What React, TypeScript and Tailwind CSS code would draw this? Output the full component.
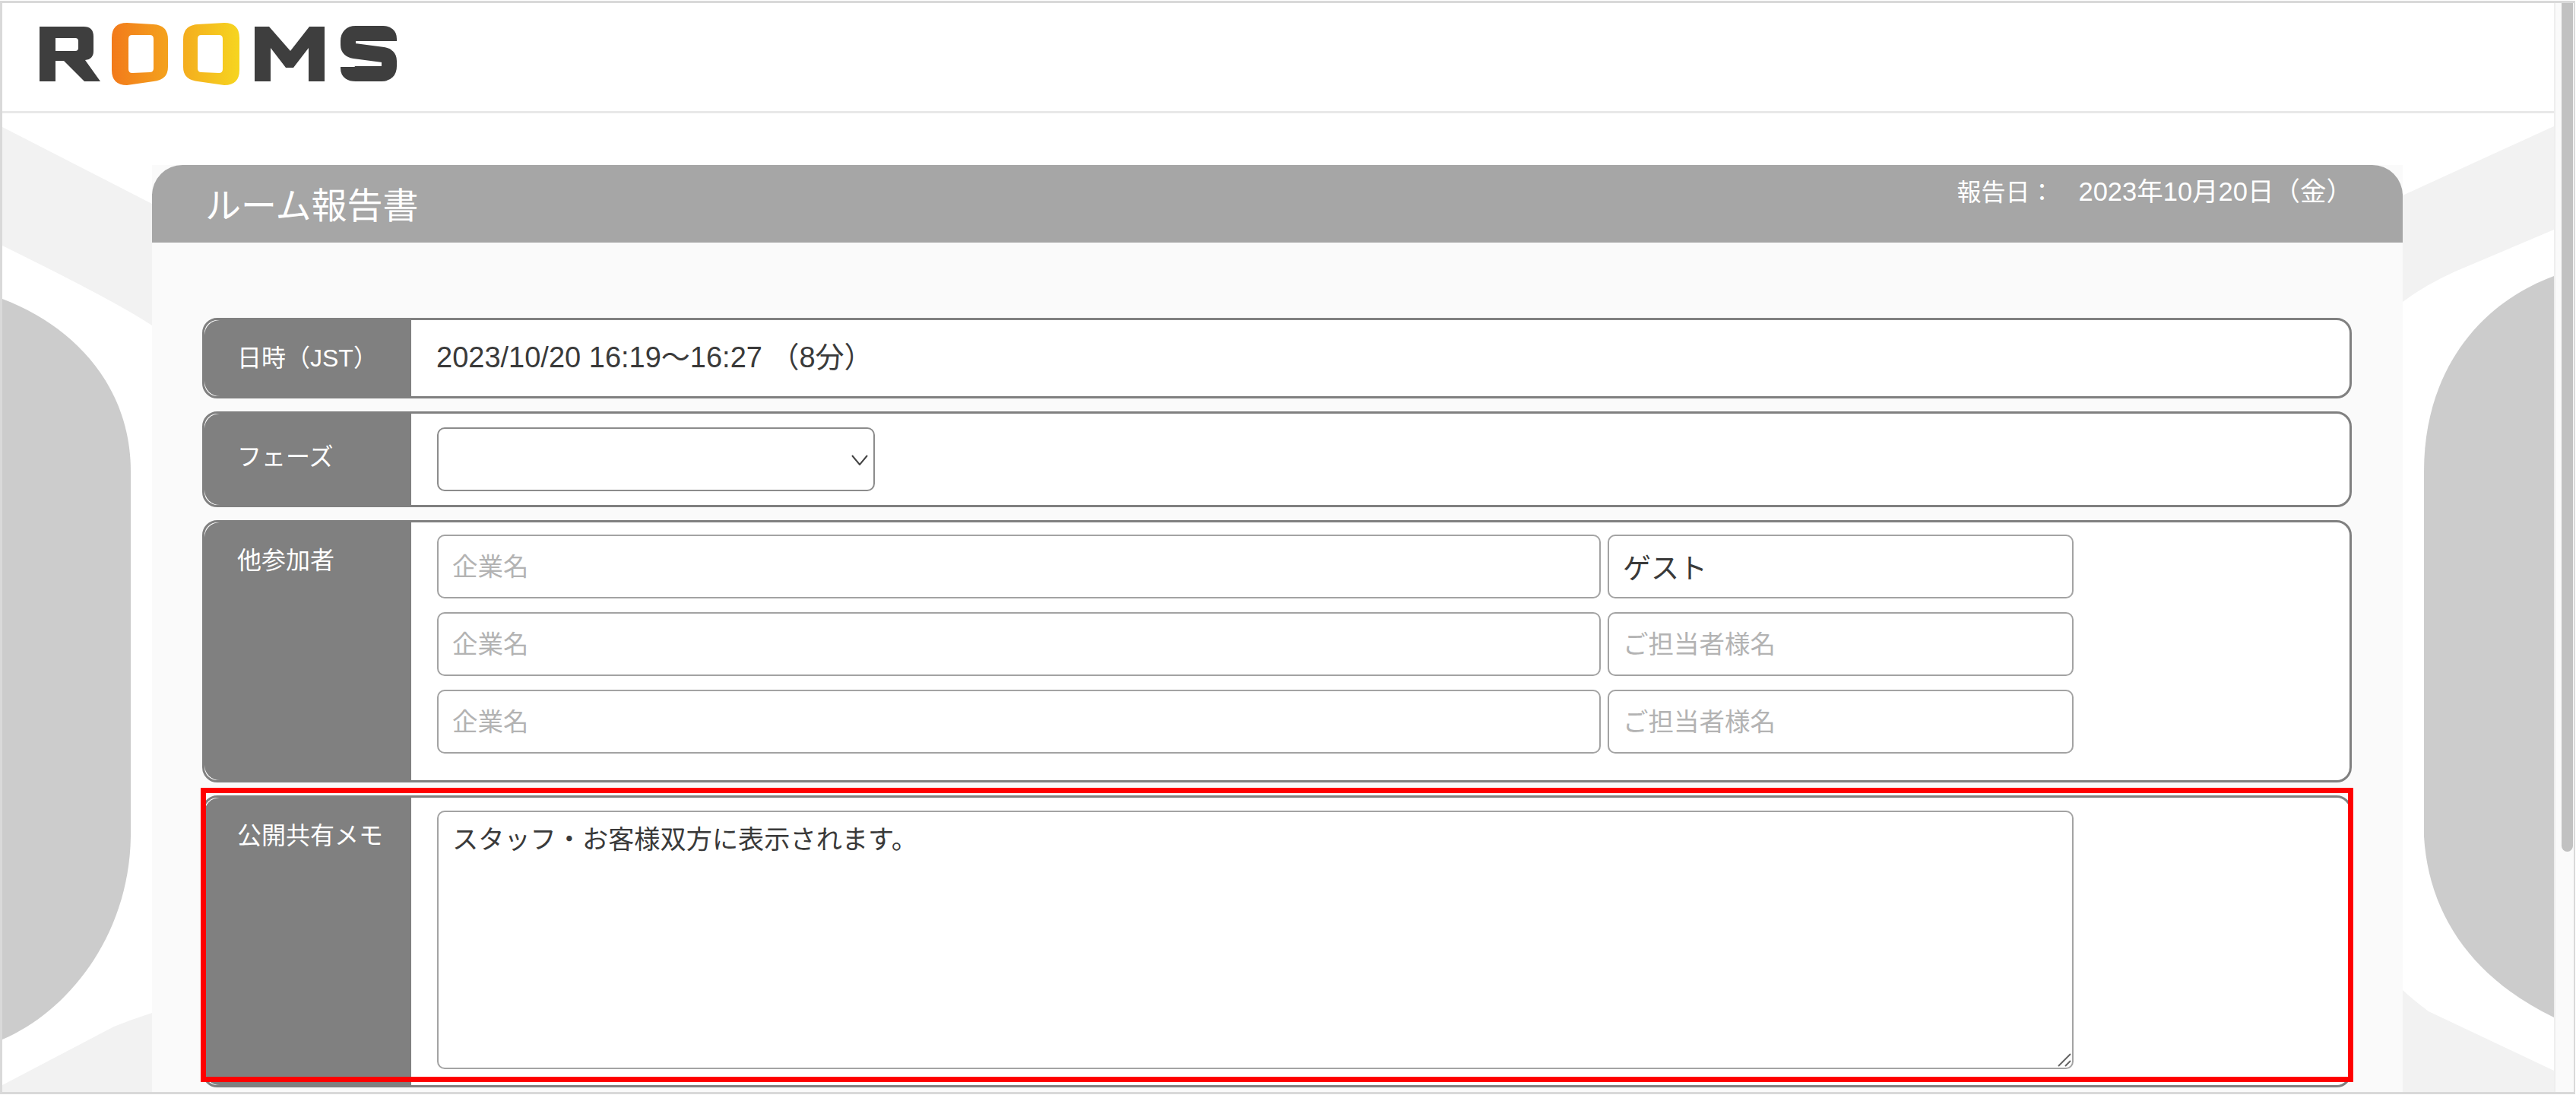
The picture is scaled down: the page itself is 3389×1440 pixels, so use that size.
import React from "react";

function Logo() {
  return (
    <svg width="470" height="82" viewBox="0 0 470 82" className="block">
      <defs>
        <linearGradient id="roomsGrad" gradientUnits="userSpaceOnUse" x1="95" y1="0" x2="263" y2="0">
          <stop offset="0" stopColor="#f27a1b" />
          <stop offset="1" stopColor="#f6d520" />
        </linearGradient>
      </defs>
      <path fill="#3e3e3e" fillRule="evenodd" d="M0 5H58Q71 5 71 18V37Q71 48 60 49L80 77H59L32 50H21V77H0ZM21 20V37H47Q51 37 51 33V24Q51 20 47 20Z" />
      <path fill="url(#roomsGrad)" fillRule="evenodd" d="M115 0L150 2Q169 3 169 22V58Q169 75 150 77L115 82Q95 82 95 62V20Q95 0 115 0ZM122 16Q117 16 117 21V61Q117 66 122 66L145 65Q150 65 150 60V21Q150 16 145 16Z" />
      <path fill="url(#roomsGrad)" fillRule="evenodd" d="M243 0L208 2Q189 3 189 22V58Q189 75 208 77L243 82Q263 82 263 62V20Q263 0 243 0ZM236 16Q241 16 241 21V61Q241 66 236 66L213 65Q208 65 208 60V21Q208 16 213 16Z" />
      <path fill="#3e3e3e" d="M283 5H302L330 37L355 5H375V77H354V33L334 59H324L304 33V77H283Z" />
      <path fill="none" stroke="#3e3e3e" strokeWidth="20" d="M460 24V21Q460 14 452 14H416Q406 14 406 24V29Q406 36 414 37L452 42Q460 43 460 50V57Q460 67 450 67H416Q406 67 406 60V58" />
    </svg>
  );
}

function Backdrop() {
  return (
    <svg className="absolute left-0 top-0" width="3357" height="1290" viewBox="3 149 3357 1290">
      <path fill="#f2f2f2" d="M3 167L200 268V428Q150 395 3 323Z" />
      <path fill="#f2f2f2" d="M3360 166L3161 257V397Q3190 375 3230 357L3360 302Z" />
      <path fill="#f2f2f2" d="M3 1427L150 1350Q175 1340 200 1332V1439H3Z" />
      <path fill="#f2f2f2" d="M3161 1302Q3175 1315 3195 1330L3360 1408V1439H3161Z" />
      <path fill="#cccccc" d="M3 393C100 430 172 510 172 620V1100C170 1230 90 1330 3 1367Z" />
      <path fill="#cccccc" d="M3360 363C3260 400 3189 490 3189 620V1100C3195 1200 3250 1285 3360 1338Z" />
    </svg>
  );
}

const inputClass =
  "h-[84px] w-full rounded-[10px] border-2 border-[#a3a3a3] bg-white px-[18px] text-[37px] text-[#3a3a3a] outline-none placeholder:text-[33.5px] placeholder:text-[#b3b3b3]";

export default function App() {
  return (
    <div className="relative h-[1440px] w-[3389px] overflow-hidden bg-white py-px pr-px font-['Liberation_Sans','Noto_Sans_CJK_JP',sans-serif]">
      <div className="flex h-full border-[3px] border-[#d9d9d9] border-r-[2px]">
        <div className="flex min-w-0 flex-1 flex-col overflow-hidden bg-white">
          <header className="h-[145px] shrink-0 border-b-[3px] border-[#e8e8e8] pl-[49px] pt-[26px]">
            <Logo />
          </header>
          <main className="relative min-h-0 flex-1 pl-[197px] pr-[199px] pt-[68px]">
            <Backdrop />
            <div className="relative h-full bg-[#fafafa]">
              <div className="flex h-[102px] items-start justify-between rounded-t-[40px] bg-[#a6a6a6] pl-[70px] pr-[66px] text-white">
                <h1 className="mt-[20px] text-[47px] font-normal leading-[68px]">ルーム報告書</h1>
                <div className="mt-[12px] flex items-baseline gap-[32px] text-[32px] leading-[46px]">
                  <span>報告日：</span>
                  <span className="text-[34.5px]">2023年10月20日（金）</span>
                </div>
              </div>
              <div className="flex flex-col gap-[17px] pl-[66px] pr-[67px] pt-[99px]">
                <section className="flex h-[106px] overflow-hidden rounded-[20px] border-[3px] border-[#808080] bg-white">
                  <div className="flex w-[272px] shrink-0 items-center rounded-l-[20px] bg-[#808080] pl-[43px] text-[32px] text-white">日時（JST）</div>
                  <div className="flex flex-1 items-center pb-[2px] pl-[33px] text-[38px] text-[#3a3a3a]">2023/10/20 16:19〜16:27 （8分）</div>
                </section>
                <section className="flex h-[126px] overflow-hidden rounded-[20px] border-[3px] border-[#808080] bg-white">
                  <div className="flex w-[272px] shrink-0 items-center rounded-l-[20px] bg-[#808080] pb-[6px] pl-[43px] text-[32px] text-white">フェーズ</div>
                  <div className="flex flex-1 items-center pl-[34px]">
                    <div className="relative h-[84px] w-[576px]">
                      <select className="h-full w-full appearance-none rounded-[10px] border-2 border-[#8c8c8c] bg-white" aria-label="フェーズ" />
                      <svg className="pointer-events-none absolute left-[545px] top-[36px]" width="22" height="14" viewBox="0 0 22 14">
                        <path d="M1 1L11 13L21 1" fill="none" stroke="#444444" strokeWidth="2" />
                      </svg>
                    </div>
                  </div>
                </section>
                <section className="flex h-[345px] overflow-hidden rounded-[20px] border-[3px] border-[#808080] bg-white">
                  <div className="w-[272px] shrink-0 rounded-l-[20px] bg-[#808080] pl-[43px] pt-[28px] text-[32px] leading-[44px] text-white">他参加者</div>
                  <div className="grid flex-1 grid-cols-[1531px_613px] content-start gap-x-[9px] gap-y-[18px] pl-[34px] pt-[16px]">
                    <input className={inputClass} placeholder="企業名" />
                    <input className={inputClass} defaultValue="ゲスト" />
                    <input className={inputClass} placeholder="企業名" />
                    <input className={inputClass} placeholder="ご担当者様名" />
                    <input className={inputClass} placeholder="企業名" />
                    <input className={inputClass} placeholder="ご担当者様名" />
                  </div>
                </section>
                <section className="flex h-[384px] overflow-hidden rounded-[20px] border-[3px] border-[#808080] bg-white">
                  <div className="w-[272px] shrink-0 rounded-l-[20px] bg-[#808080] pl-[43px] pt-[28px] text-[32px] leading-[44px] text-white">公開共有メモ</div>
                  <div className="flex-1 pl-[34px] pt-[17px]">
                    <div className="relative h-[340px] w-[2153px]">
                      <textarea
                        className="block h-full w-full resize-none rounded-[10px] border-2 border-[#a3a3a3] bg-white px-[18px] py-[14px] text-[34.2px] leading-[44px] text-[#3a3a3a] outline-none"
                        defaultValue="スタッフ・お客様双方に表示されます。"
                      />
                      <svg className="pointer-events-none absolute bottom-[3px] right-[3px]" width="18" height="18" viewBox="0 0 18 18">
                        <path d="M1 17L17 1M10 17L17 10" fill="none" stroke="#666666" strokeWidth="2" />
                      </svg>
                    </div>
                  </div>
                </section>
              </div>
            </div>
          </main>
        </div>
        <div className="h-full w-[26px] shrink-0 border-l-2 border-[#eeeeee] bg-[#fafafa] pl-[8px]">
          <div className="h-[1116px] w-[15px] rounded-b-full bg-[#c1c1c1]" />
        </div>
      </div>
      <div className="pointer-events-none absolute left-[264px] top-[1036px] h-[387px] w-[2832px] border-[7px] border-[#ff0000]" />
    </div>
  );
}
